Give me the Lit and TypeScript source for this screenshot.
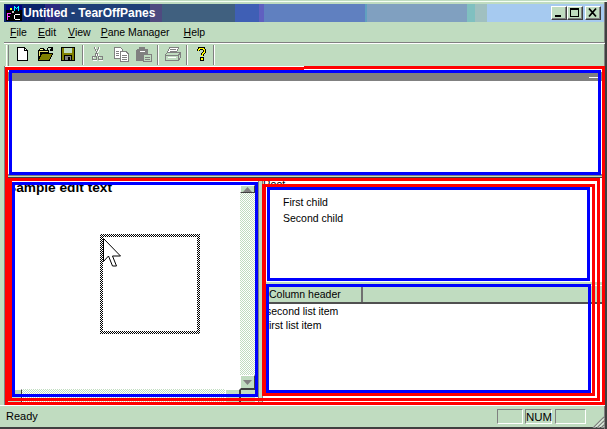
import { LitElement, html, css, svg } from "lit";
import { customElement } from "lit/decorators.js";

type Bar = [number, number, number, number, string];

const RED = "#ff0000";
const BLUE = "#0000ff";

function frame(x0: number, y0: number, x1: number, y1: number, c: string, t = 3): Bar[] {
  return [
    [x0, y0, x1, y0 + t, c],
    [x0, y1 - t, x1, y1, c],
    [x0, y0, x0 + t, y1, c],
    [x1 - t, y0, x1, y1, c],
  ];
}

const BARS: Bar[] = [
  [5, 67, 304, 70, RED],
  [304, 66, 605, 69, RED],
  [5, 67, 8, 405, RED],
  [602, 66, 605, 405, RED],
  [5, 402, 605, 405, RED],
  ...frame(8, 178, 600, 401, RED),
  [8, 178, 12, 401, RED],
  ...frame(262, 184, 595, 396, RED),
  [262, 184, 266, 396, RED],
  ...frame(9, 70, 601, 174.5, BLUE),
  ...frame(12, 182, 258, 397, BLUE),
  ...frame(267, 187, 590, 281, BLUE),
  ...frame(266, 284, 591, 393, BLUE),
];

const icons = {
  new: svg`<path d="M2.500 1.500h7l3 3v9.500h-10z" fill="#fff" stroke="#000"/><path d="M9.500 1.500v3h3" fill="none" stroke="#000"/>`,
  open: svg`<path d="M.5 4.500l2-2h3l1 2h4v2" fill="#ffff99" stroke="#000"/><path d="M.5 14.500v-10h10v2h-7.500l-2.500 8z" fill="#e8e070" stroke="#000"/><path d="M.5 14.500l3-7h11l-3 7z" fill="#808000" stroke="#000"/><path d="M9 3.500c1-2 3-3 5-1.500" fill="none" stroke="#000"/><path d="M15 .5v4h-3.500z" fill="#000"/>`,
  save: svg`<rect x=".5" y="1.500" width="13" height="13" fill="#808000" stroke="#000"/><rect x="3" y="2" width="8" height="5" fill="#c0dcc0"/><rect x="3.500" y="9.500" width="7" height="5" fill="#808080" stroke="#000"/><rect x="7" y="10.500" width="2" height="3" fill="#000"/>`,
  cut: svg`<g fill="none" stroke="#fff"><path d="M5 1.500l4 9M10 1.500l-4 9"/><circle cx="5" cy="12.500" r="2"/><circle cx="11" cy="12.500" r="2"/></g><g fill="none" stroke="#808080"><path d="M4 1l4 8.500M9 1l-4 8.500"/><circle cx="4.500" cy="12" r="2"/><circle cx="10.500" cy="12" r="2"/></g>`,
  copy: svg`<path d="M1.500 1.500h6l2 2v9h-8z" fill="#fff" stroke="#808080"/><path d="M7 5.500h6l2.500 2.500v7h-8.500z" fill="#fff" stroke="#808080"/><path d="M3 5h3M3 7h3M3 9h3M9 9h5M9 11h5M9 13h5" stroke="#808080"/>`,
  paste: svg`<rect x="0" y="3" width="12" height="12" rx="2" fill="#808080"/><rect x="3" y="1" width="6" height="3" fill="#808080"/><rect x="3.500" y="5" width="5" height="1" fill="#fff"/><path d="M7.500 8.500h8v7h-8z" fill="#c0dcc0" stroke="#808080"/><path d="M9 11h5M9 13h5" stroke="#808080"/><path d="M7 16h9" stroke="#fff"/>`,
  print: svg`<path d="M4.500 1.500h9l-2 5h-9z" fill="#fff" stroke="#808080"/><path d="M.5 8.500l2-2h13v5l-2 3h-13z" fill="#c0dcc0" stroke="#808080"/><path d="M1 9.500h12v5M13 9.500l2-2" fill="none" stroke="#808080"/><path d="M3 11.500h8" stroke="#fff"/><path d="M5 3.500h6M4.500 5h6" stroke="#808080"/>`,
  help: svg`<path d="M4.500 5c0-4 6-4 6 0 0 2.500-2.500 2.500-2.500 5" fill="none" stroke="#000" stroke-width="3"/><rect x="5.500" y="11" width="4.500" height="4" fill="#000"/><path d="M4.500 5c0-3.500 6-3.500 6 0 0 2-2.500 2.500-2.500 5" fill="none" stroke="#ffff00" stroke-width="1.300"/><rect x="7" y="12" width="2" height="2" fill="#ffff00"/>`,
};

const MFC = svg`<rect width="16" height="16" fill="#000"/><rect x="0" y="0" width="16" height="5" fill="#000080"/>
<g fill="#00ffff"><rect x="8" y="1" width="1" height="5"/><rect x="9" y="2" width="1" height="1"/><rect x="10" y="3" width="1" height="1"/><rect x="11" y="2" width="1" height="1"/><rect x="12" y="1" width="1" height="5"/></g>
<g fill="#ff40ff"><rect x="1" y="8" width="1" height="7"/><rect x="1" y="8" width="4" height="1"/><rect x="1" y="11" width="3" height="1"/></g>
<g fill="#ffffff"><rect x="9" y="9" width="5" height="1"/><rect x="8" y="10" width="1" height="4"/><rect x="9" y="14" width="5" height="1"/></g>
<rect x="4" y="3" width="2" height="2" fill="#ffff00"/><rect x="6" y="6" width="2" height="2" fill="#c0c0c0"/>`;

@customElement("app-root")
export class AppRoot extends LitElement {
  static styles = css`
    :host {
      display: block;
      width: 607px;
      height: 429px;
      position: relative;
      overflow: hidden;
      font-family: "Liberation Sans", Arial, sans-serif;
      font-size: 10.5px;
      color: #000;
      background: #c0dcc0;
    }
    .window {
      box-sizing: border-box;
      width: 607px;
      height: 429px;
      padding: 3px 3px 2px 4px;
      display: flex;
      flex-direction: column;
      background: #c0dcc0;
      border-top: 1px solid #c0dcc0;
      box-shadow: inset 0 1px 0 #f4fff4, inset -2px 0 0 #404040, inset -3px 0 0 #808080, inset 0 -2px 0 #404040;
    }
    .title {
      flex: none;
      height: 18px;
      display: flex;
      align-items: center;
      padding: 0 3px 0 2px;
      color: #fff;
      font-weight: bold;
      font-size: 12px;
      background: linear-gradient(90deg,
        #0a246a 0 41px, #2a2a80 41px 56px, #1f3f78 56px 146px, #4f4a80 146px 158px,
        #40607f 158px 231px, #3f5fb5 231px 255px, #6060c0 255px 260px, #6080c0 260px 361px,
        #60a0c0 361px 363px, #80a0c0 363px 463px, #80c0c0 463px 471px, #a0c0c0 471px 483px,
        #a6caf0 483px);
    }
    .app-icon { width: 16px; height: 16px; flex: none; margin-right: 1px; }
    .title-text { flex: 1; white-space: nowrap; }
    .wbtn {
      box-sizing: border-box;
      width: 16px;
      height: 14px;
      background: #c0dcc0;
      border: 1px solid;
      border-color: #fff #404040 #404040 #fff;
      box-shadow: inset -1px -1px 0 #808080;
      display: flex;
      flex: none;
    }
    .wbtn svg { width: 14px; height: 12px; }
    .wbtn.close { margin: 0 0 0 2px; }
    .menu {
      flex: none;
      height: 20px;
      display: flex;
      align-items: center;
    }
    .menu span { white-space: nowrap; }
    .menu span.m1 { margin-left: 6px; }
    .menu span.m2 { margin-left: 11px; }
    .menu span.m3 { margin-left: 12px; }
    .menu span.m4 { margin-left: 10px; }
    .menu span.m5 { margin-left: 14px; }
    .rule {
      flex: none;
      height: 1px;
      background: #808080;
      border-bottom: 1px solid #fff;
      margin-right: -1px;
    }
    .toolbar {
      flex: none;
      height: 22px;
      display: flex;
      align-items: stretch;
    }
    .grip {
      box-sizing: border-box;
      width: 3px;
      margin: 1px 2px 0 2px;
      border-left: 1px solid #fff;
      border-right: 1px solid #808080;
      background: #c0dcc0;
    }
    .tb {
      width: 23px;
      box-sizing: border-box;
      padding: 2px 0 0 4px;
      flex: none;
    }
    .tb svg { width: 16px; height: 16px; display: block; }
    .sep {
      width: 6px;
      flex: none;
      display: flex;
      justify-content: center;
    }
    .sep::after {
      content: "";
      width: 1px;
      background: #808080;
      box-shadow: 1px 0 0 #fff;
      margin: 1px 0 1px -1px;
    }
    .tb-end { width: 1px; background: #808080; box-shadow: 1px 0 0 #fff; margin: 1px 0; }
    .client {
      flex: none;
      height: 339px;
      display: flex;
      flex-direction: column;
      margin-right: -1px;
      border-left: 1px solid #808080;
    }
    .top-pane {
      flex: none;
      height: 108px;
      background: #fff;
      padding-top: 6px;
      box-sizing: border-box;
    }
    .top-head {
      height: 9px;
      background: #808080;
      display: flex;
      justify-content: flex-end;
      padding: 5px 6px 0 0;
      box-sizing: border-box;
    }
    .top-head i { display: block; width: 10px; height: 1px; background: #fff; }
    .h-split {
      flex: none;
      height: 4px;
      box-sizing: border-box;
      background: #c0dcc0;
      border-top: 2px solid #808080;
      border-bottom: 1px solid #404040;
    }
    .bottom { flex: 1; display: flex; min-height: 0; }
    .left {
      flex: none;
      width: 253px;
      display: grid;
      grid-template-columns: 1fr 15px;
      grid-template-rows: 1fr 14px;
      padding: 0 3px 2px 0;
      box-sizing: border-box;
      background: #fff;
    }
    .edit {
      background: #fff;
      padding: 2px 0 0 2px;
      font-weight: bold;
      font-size: 13.700px;
      line-height: 15px;
      overflow: hidden;
      white-space: nowrap;
      min-width: 0;
    }
    .vscroll {
      display: flex;
      flex-direction: column;
      padding-top: 7px;
      background: #fff;
    }
    .track {
      flex: 1;
      background: repeating-conic-gradient(#c0dcc0 0 25%, #fff 0 50%) 0 0 / 2px 2px;
    }
    .sb {
      box-sizing: border-box;
      flex: none;
      width: 15px;
      height: 14px;
      background: #c0dcc0;
      border: 1px solid;
      border-color: #fff #404040 #404040 #fff;
      display: flex;
      align-items: center;
      justify-content: center;
    }
    .sb.up { height: 8px; }
    .sb svg { width: 9px; height: 5px; }
    .hscroll { display: flex; }
    .hscroll .sb.l { width: 17px; }
    .hscroll .track { flex: 1; }
    .corner { background: #c0dcc0; border-top: 1px solid #404040; border-left: 1px solid #404040; box-sizing: border-box; }
    .v-split {
      flex: none;
      width: 5px;
      box-sizing: border-box;
      background: #c0dcc0;
      border-left: 1px solid #808080;
      border-right: 1px solid #808080;
    }
    .right { flex: 1; display: flex; flex-direction: column; min-width: 0; background: #fff; }
    .tree {
      flex: none;
      height: 104px;
      background: #fff;
      box-sizing: border-box;
      padding-top: 1px;
      line-height: 16px;
    }
    .root { height: 15px; line-height: 10px; overflow: hidden; }
    .child { padding-left: 20px; height: 16px; }
    .r-split { flex: none; height: 3px; background: #c0dcc0; }
    .list { flex: 1; background: #fff; }
    .list-head {
      box-sizing: border-box;
      height: 18px;
      margin-top: 1px;
      display: flex;
      background: #c0dcc0;
      border-bottom: 2px solid #505050;
      line-height: 17px;
    }
    .col { width: 100px; padding-left: 6px; box-sizing: border-box; border-right: 2px solid #707070; }
    .items { line-height: 14px; margin-left: 3px; }
    .items div { height: 14px; white-space: nowrap; }
    .status {
      flex: none;
      height: 22px;
      border-top: 1px solid #fff;
      display: flex;
      align-items: flex-start;
      box-sizing: border-box;
      margin-right: -1px;
      margin-left: -4px;
      padding-left: 6px;
    }
    .ready { flex: 1; font-size: 11px; line-height: 21px; }
    .pane {
      box-sizing: border-box;
      height: 15px;
      margin: 3px 3px 0 0;
      border: 1px solid;
      border-color: #808080 #fff #fff #808080;
      text-align: center;
      line-height: 14px;
      font-size: 11.500px;
    }
    .p1 { width: 26px; margin-right: 2px; }
    .p2 { width: 27px; }
    .p3 { width: 31px; margin-right: 6px; }
    .gripper { width: 13px; height: 12px; margin-top: 10px; display: block; flex: none; }
    .overlay { position: absolute; inset: 0; pointer-events: none; }
    .bar { position: absolute; }
    .tracker {
      position: absolute;
      left: 100px;
      top: 234px;
      width: 100px;
      height: 100px;
      box-sizing: border-box;
      padding: 3px;
      background: repeating-conic-gradient(#000 0 25%, #fff 0 50%) 0 0 / 2px 2px;
    }
    .tracker i { display: block; width: 100%; height: 100%; background: #fff; }
    .cursor { position: absolute; left: 102px; top: 237px; width: 20px; height: 32px; }
  `;

  private icon(name: keyof typeof icons) {
    return html`<div class="tb"><svg viewBox="0 0 16 16" shape-rendering="crispEdges">${icons[name]}</svg></div>`;
  }

  render() {
    const arrowUp = html`<svg viewBox="0 0 9 5"><path d="M4.500 0l4.500 5h-9z" fill="#808080"/></svg>`;
    const arrowDown = html`<svg viewBox="0 0 9 5"><path d="M0 0h9l-4.500 5z" fill="#808080"/></svg>`;
    return html`
      <div class="window">
        <div class="title">
          <svg class="app-icon" viewBox="0 0 16 16" shape-rendering="crispEdges">${MFC}</svg>
          <span class="title-text">Untitled - TearOffPanes</span>
          <div class="wbtn"><svg viewBox="0 0 14 12" shape-rendering="crispEdges"><rect x="3" y="8" width="6" height="2"/></svg></div>
          <div class="wbtn"><svg viewBox="0 0 14 12" shape-rendering="crispEdges"><path d="M2.500 1.500h8v8h-8z" fill="none" stroke="#000"/><rect x="2" y="1" width="9" height="2"/></svg></div>
          <div class="wbtn close"><svg viewBox="0 0 14 12"><path d="M3 1.500l7 8M10 1.500l-7 8" stroke="#000" stroke-width="1.800"/></svg></div>
        </div>
        <div class="menu">
          <span class="m1"><u>F</u>ile</span>
          <span class="m2"><u>E</u>dit</span>
          <span class="m3"><u>V</u>iew</span>
          <span class="m4"><u>P</u>ane Manager</span>
          <span class="m5"><u>H</u>elp</span>
        </div>
        <div class="rule"></div>
        <div class="toolbar">
          <div class="grip"></div>
          ${this.icon("new")}${this.icon("open")}${this.icon("save")}
          <div class="sep"></div>
          ${this.icon("cut")}${this.icon("copy")}${this.icon("paste")}
          <div class="sep"></div>
          ${this.icon("print")}
          <div class="sep"></div>
          ${this.icon("help")}
          <div class="tb-end"></div>
        </div>
        <div class="client">
          <div class="top-pane"><div class="top-head"><i></i></div></div>
          <div class="h-split"></div>
          <div class="bottom">
            <div class="left">
              <div class="edit">Sample edit text</div>
              <div class="vscroll">
                <div class="sb up">${arrowUp}</div>
                <div class="track"></div>
                <div class="sb">${arrowDown}</div>
              </div>
              <div class="hscroll">
                <div class="sb l"></div>
                <div class="track"></div>
                <div class="sb"></div>
              </div>
              <div class="corner"></div>
            </div>
            <div class="v-split"></div>
            <div class="right">
              <div class="tree">
                <div class="root">Root</div>
                <div class="child">First child</div>
                <div class="child">Second child</div>
              </div>
              <div class="r-split"></div>
              <div class="list">
                <div class="list-head"><div class="col">Column header</div></div>
                <div class="items">
                  <div>second list item</div>
                  <div>first list item</div>
                </div>
              </div>
            </div>
          </div>
        </div>
        <div class="status">
          <div class="ready">Ready</div>
          <div class="pane p1"></div>
          <div class="pane p2">NUM</div>
          <div class="pane p3"></div>
          <svg class="gripper" viewBox="0 0 13 12"><path d="M1 12l11-11M5 12l7-7M9 12l3-3" stroke="#808080" stroke-width="1.200"/><path d="M2.500 12l9.500-9.500M6.500 12l5.500-5.500M10.500 12l1.500-1.500" stroke="#fff" stroke-width=".8"/></svg>
        </div>
      </div>
      <div class="overlay">
        ${BARS.map(
          ([x0, y0, x1, y1, c]) =>
            html`<div class="bar" style="left:${x0}px;top:${y0}px;width:${x1 - x0}px;height:${y1 - y0}px;background:${c}"></div>`
        )}
        <div class="tracker"><i></i></div>
        <svg class="cursor" viewBox="0 0 20 32"><path d="M1.500 1.500v23l5-5.500 4 10h4l-4-10h8z" fill="#fff" stroke="#000"/></svg>
      </div>
    `;
  }
}
